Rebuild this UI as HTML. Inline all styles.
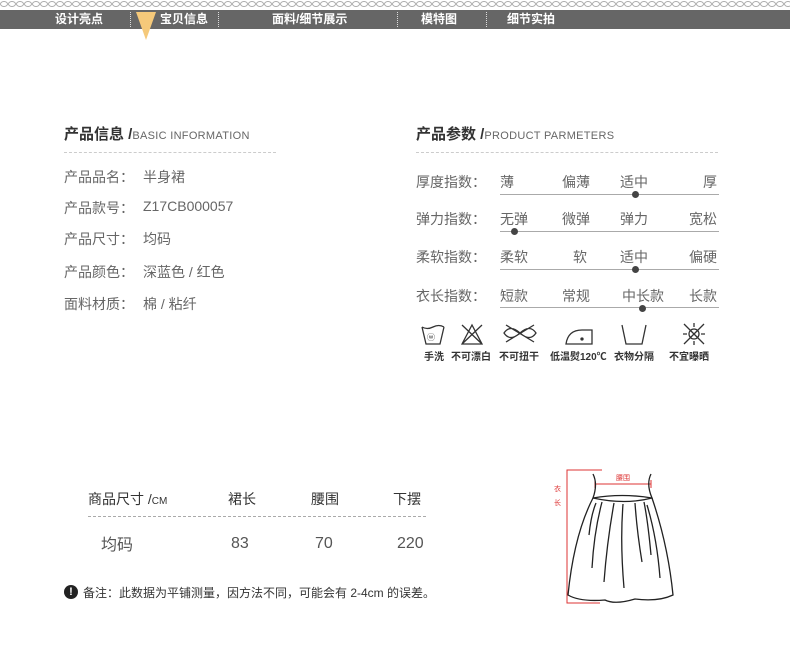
<!DOCTYPE html>
<html><head><meta charset="utf-8"><style>
*{margin:0;padding:0}
body{width:790px;height:649px;background:#fff;position:relative;overflow:hidden;font-family:"Liberation Sans","Noto Sans CJK SC",sans-serif;color:#666}
.a{position:absolute;white-space:nowrap}
.nav{position:absolute;left:0;top:10px;width:790px;height:19px;background:#666}
.nav span{position:absolute;top:1px;color:#fff;font-size:12px;font-weight:bold;line-height:17px}
.sep{position:absolute;top:2px;height:15px;border-left:1px dotted #ddd}
.t{font-size:14px;color:#666}
.h{font-size:15px;font-weight:bold;color:#333}
.h small{font-size:11px;font-weight:normal;color:#666;letter-spacing:.3px}
.line{position:absolute;height:1px;background:#aaa;left:500px;width:219px}
.dot{position:absolute;width:7px;height:7px;border-radius:50%;background:#444}
.ic{font-size:10px;font-weight:bold;color:#333}
</style></head><body>
<svg class="a" style="left:0;top:0" width="790" height="10"><defs><pattern id="p" width="8" height="8" patternUnits="userSpaceOnUse"><ellipse cx="4" cy="4" rx="3.5" ry="2.5" fill="none" stroke="#aaa" stroke-width="1"/></pattern></defs><rect width="790" height="9" fill="url(#p)"/></svg>
<div class="nav">
<span style="left:55px">设计亮点</span><div class="sep" style="left:130px"></div>
<span style="left:160px">宝贝信息</span><div class="sep" style="left:218px"></div>
<span style="left:272px">面料/细节展示</span><div class="sep" style="left:397px"></div>
<span style="left:421px">模特图</span><div class="sep" style="left:486px"></div>
<span style="left:507px">细节实拍</span>
</div>
<svg class="a" style="left:136px;top:12px" width="22" height="28"><polygon points="0,0 20,0 10,28" fill="#f5c97a"/></svg>

<div class="a h" style="left:64px;top:123px">产品信息 /<small>BASIC INFORMATION</small></div>
<div class="a" style="left:64px;top:152px;width:212px;border-top:1px dashed #ccc"></div>
<div class="a t" style="left:64px;top:167px">产品品名：</div><div class="a t" style="left:143px;top:167px">半身裙</div>
<div class="a t" style="left:64px;top:198px">产品款号：</div><div class="a t" style="left:143px;top:198px">Z17CB000057</div>
<div class="a t" style="left:64px;top:229px">产品尺寸：</div><div class="a t" style="left:143px;top:229px">均码</div>
<div class="a t" style="left:64px;top:262px">产品颜色：</div><div class="a t" style="left:143px;top:262px">深蓝色 / 红色</div>
<div class="a t" style="left:64px;top:294px">面料材质：</div><div class="a t" style="left:143px;top:294px">棉 / 粘纤</div>

<div class="a h" style="left:416px;top:123px">产品参数 /<small>PRODUCT PARMETERS</small></div>
<div class="a" style="left:416px;top:152px;width:302px;border-top:1px dashed #ccc"></div>

<div class="a t" style="left:416px;top:172px">厚度指数：</div>
<div class="a t" style="left:500px;top:172px">薄</div><div class="a t" style="left:562px;top:172px">偏薄</div><div class="a t" style="left:620px;top:172px">适中</div><div class="a t" style="left:703px;top:172px">厚</div>
<div class="line" style="top:194px"></div><div class="dot" style="left:632px;top:191px"></div>

<div class="a t" style="left:416px;top:209px">弹力指数：</div>
<div class="a t" style="left:500px;top:209px">无弹</div><div class="a t" style="left:562px;top:209px">微弹</div><div class="a t" style="left:620px;top:209px">弹力</div><div class="a t" style="left:689px;top:209px">宽松</div>
<div class="line" style="top:231px"></div><div class="dot" style="left:511px;top:228px"></div>

<div class="a t" style="left:416px;top:247px">柔软指数：</div>
<div class="a t" style="left:500px;top:247px">柔软</div><div class="a t" style="left:573px;top:247px">软</div><div class="a t" style="left:620px;top:247px">适中</div><div class="a t" style="left:689px;top:247px">偏硬</div>
<div class="line" style="top:269px"></div><div class="dot" style="left:632px;top:266px"></div>

<div class="a t" style="left:416px;top:286px">衣长指数：</div>
<div class="a t" style="left:500px;top:286px">短款</div><div class="a t" style="left:562px;top:286px">常规</div><div class="a t" style="left:622px;top:286px">中长款</div><div class="a t" style="left:689px;top:286px">长款</div>
<div class="line" style="top:307px"></div><div class="dot" style="left:639px;top:305px"></div>

<svg class="a" style="left:416px;top:322px" width="310" height="26" fill="none" stroke="#333" stroke-width="1.3">
<path d="M6 5 L10 22 H24 L28 5 M6 5 Q11 8 17 5 Q23 2 28 5"/><text x="11" y="18" font-size="8" fill="#333" stroke="none">ⓦ</text>
<path d="M46 22 L56 3 L66 22 Z M46 3 L66 22 M66 3 L46 22"/>
<path d="M88 11 Q94 2 104 11 Q114 20 120 11 Q114 2 104 11 Q94 20 88 11 Z M90 3 L118 20 M118 3 L90 20"/>
<path d="M150 22 H176 V8 H166 Q152 8 150 22 Z"/><circle cx="166" cy="17" r="1" fill="#333"/>
<path d="M206 3 L210 22 H226 L230 3"/>
<circle cx="278" cy="12" r="5"/><path d="M268 2 L288 22 M288 2 L268 22 M278 1 V5 M278 19 V23 M267 12 H271 M285 12 H289"/>
</svg>
<div class="a ic" style="left:424px;top:348px">手洗</div>
<div class="a ic" style="left:451px;top:348px">不可漂白</div>
<div class="a ic" style="left:499px;top:348px">不可扭干</div>
<div class="a ic" style="left:550px;top:348px">低温熨120℃</div>
<div class="a ic" style="left:614px;top:348px">衣物分隔</div>
<div class="a ic" style="left:669px;top:348px">不宜曝晒</div>

<div class="a" style="left:88px;top:489px;font-size:14px;color:#333">商品尺寸 /<span style="font-size:10px">CM</span></div>
<div class="a" style="left:228px;top:489px;font-size:14px;color:#333">裙长</div>
<div class="a" style="left:311px;top:489px;font-size:14px;color:#333">腰围</div>
<div class="a" style="left:393px;top:489px;font-size:14px;color:#333">下摆</div>
<div class="a" style="left:88px;top:516px;width:338px;border-top:1px dashed #aaa"></div>
<div class="a" style="left:101px;top:531px;font-size:16px;color:#555">均码</div>
<div class="a" style="left:231px;top:535px;font-size:16px;color:#555">83</div>
<div class="a" style="left:315px;top:535px;font-size:16px;color:#555">70</div>
<div class="a" style="left:397px;top:535px;font-size:16px;color:#555">220</div>
<div class="a" style="left:64px;top:585px;width:14px;height:14px;border-radius:50%;background:#222;color:#fff;font-size:11px;font-weight:bold;text-align:center;line-height:14px">!</div>
<div class="a" style="left:83px;top:584px;font-size:12px;color:#333">备注：此数据为平铺测量，因方法不同，可能会有 2-4cm 的误差。</div>

<svg class="a" style="left:540px;top:460px" width="160" height="150" fill="none">
<path d="M62 10 H27 V143 H60" stroke="#d33" stroke-width="1"/>
<path d="M55 24 H111 M55 20 V28 M111 20 V28" stroke="#d33" stroke-width="1"/>
<text x="76" y="20" font-size="7" fill="#d33">腰围</text>
<text x="14" y="31" font-size="7" fill="#d33">衣</text><text x="14" y="45" font-size="7" fill="#d33">长</text>
<g stroke="#222" stroke-width="1.3">
<path d="M53 14 Q58 24 53 38 Q82 33 112 38 Q106 24 111 14"/>
<path d="M53 38 Q34 75 28 135 Q40 142 65 140 Q75 145 95 139 Q118 142 133 135 Q128 85 112 38"/>
<path d="M53 38 Q85 45 112 38"/>
<path d="M56 43 Q51 55 49 75 M62 42 Q54 72 52 108 M74 43 Q67 82 64 122 M83 44 Q80 82 84 128 M95 43 Q97 72 102 102 M104 42 Q108 62 111 95 M107 45 Q117 78 120 118"/>
</g></svg>
</body></html>
